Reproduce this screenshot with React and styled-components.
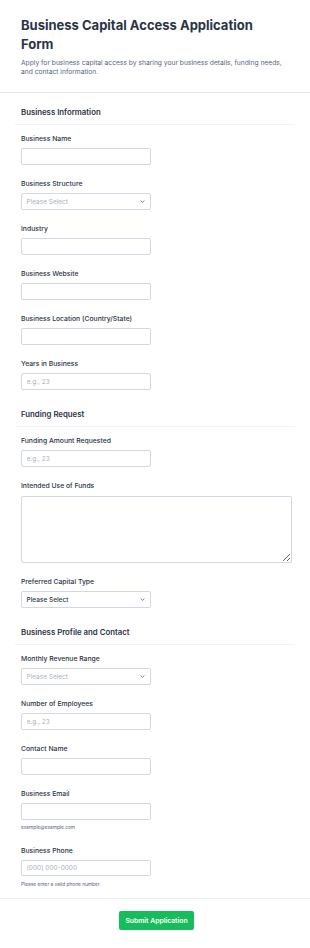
import React from "react";
import styled, { createGlobalStyle } from "styled-components";

const Global = createGlobalStyle`
  html, body { margin: 0; padding: 0; background: #fff; }
  body { font-family: Inter, "Noto Sans", sans-serif; color: #2c3345; }
  * { box-sizing: border-box; }
`;

const Page = styled.div`
  width: 310px;
  min-height: 948px;
  background: #fff;
  display: flex;
  flex-direction: column;
`;

const Header = styled.header`
  padding: 15.5px 21px 14.5px;
  border-bottom: 1px solid #e4e6eb;
`;

const Title = styled.h1`
  margin: 0;
  max-width: 250px;
  font-size: 13px;
  line-height: 19.5px;
  font-weight: 700;
  color: #2c3345;
`;

const Subtitle = styled.p`
  margin: 4px 0 0;
  font-size: 6.7px;
  line-height: 9.7px;
  color: #57647e;
`;

const Body = styled.div`
  padding: 13px 15px 10px;
  display: flex;
  flex-direction: column;
  gap: 18.4px;
`;

const Section = styled.section`
  display: flex;
  flex-direction: column;
`;

const SectionTitle = styled.h2`
  margin: 0 0 9.7px;
  padding: 0 6px 5.3px;
  font-size: 7.8px;
  line-height: 12px;
  font-weight: 600;
  color: #2c3345;
  border-bottom: 1px solid #f1f2f5;
`;

const Fields = styled.div`
  display: flex;
  flex-direction: column;
  gap: 14.3px;
  padding: 0 6px;
`;

const Field = styled.div`
  display: flex;
  flex-direction: column;
  align-items: flex-start;
`;

const Label = styled.label`
  font-size: 6.8px;
  line-height: 10px;
  font-weight: 500;
  color: #2c3345;
  margin-bottom: ${(p) => (p.$tight ? 5 : 4)}px;
`;

const Input = styled.input`
  width: 130px;
  height: 16.7px;
  border: 1px solid #d3d8e2;
  border-radius: 2px;
  padding: 0 4.5px;
  font-family: Inter, sans-serif;
  font-size: 6.5px;
  color: #2c3345;
  outline: none;
  background: #fff;
  &::placeholder { color: #a9b1c0; }
`;

const TextArea = styled.textarea`
  width: 271px;
  height: 66.6px;
  border: 1px solid #d3d8e2;
  border-radius: 2px;
  padding: 4px;
  font-family: Inter, sans-serif;
  font-size: 6.5px;
  outline: none;
  resize: vertical;
  display: block;
`;

const SelectBox = styled.div`
  width: 130px;
  height: 16.7px;
  border: 1px solid #d3d8e2;
  border-radius: 2px;
  padding: 0 5px 0 4.5px;
  display: flex;
  align-items: center;
  justify-content: space-between;
  font-size: 6.5px;
  color: ${(p) => (p.$filled ? "#2c3345" : "#a9b1c0")};
  font-weight: ${(p) => (p.$filled ? 500 : 400)};
  background: #fff;
`;

const Helper = styled.div`
  margin-top: 4.5px;
  font-size: 4.8px;
  line-height: 7px;
  color: #57647e;
`;

const Footer = styled.div`
  border-top: 1px solid #eceef2;
  padding: 12px 0 17px 3px;
  display: flex;
  justify-content: center;
`;

const Button = styled.button`
  width: 75px;
  height: 19.3px;
  border: none;
  border-radius: 2px;
  background: #18bd5b;
  color: #fff;
  font-family: Inter, sans-serif;
  font-size: 6.8px;
  font-weight: 600;
  padding: 0;
  cursor: pointer;
`;

const Chevron = () => (
  <svg width="5" height="3" viewBox="0 0 5 3" fill="none">
    <path d="M0.6 0.5 L2.5 2.3 L4.4 0.5" stroke="#57647e" strokeWidth="0.8" />
  </svg>
);

const Select = ({ filled }) => (
  <SelectBox $filled={filled}>
    <span>Please Select</span>
    <Chevron />
  </SelectBox>
);

const TextField = ({ label, placeholder, helper }) => (
  <Field>
    <Label>{label}</Label>
    <Input placeholder={placeholder} />
    {helper && <Helper>{helper}</Helper>}
  </Field>
);

export default function App() {
  return (
    <Page>
      <Global />
      <Header>
        <Title>Business Capital Access Application Form</Title>
        <Subtitle>
          Apply for business capital access by sharing your business details, funding needs,
          and contact information.
        </Subtitle>
      </Header>
      <Body>
        <Section>
          <SectionTitle>Business Information</SectionTitle>
          <Fields>
            <TextField label="Business Name" />
            <Field>
              <Label>Business Structure</Label>
              <Select />
            </Field>
            <TextField label="Industry" />
            <TextField label="Business Website" />
            <TextField label="Business Location (Country/State)" />
            <TextField label="Years in Business" placeholder="e.g., 23" />
          </Fields>
        </Section>
        <Section>
          <SectionTitle>Funding Request</SectionTitle>
          <Fields>
            <TextField label="Funding Amount Requested" placeholder="e.g., 23" />
            <Field>
              <Label $tight>Intended Use of Funds</Label>
              <TextArea />
            </Field>
            <Field>
              <Label>Preferred Capital Type</Label>
              <Select filled />
            </Field>
          </Fields>
        </Section>
        <Section>
          <SectionTitle>Business Profile and Contact</SectionTitle>
          <Fields>
            <Field>
              <Label>Monthly Revenue Range</Label>
              <Select />
            </Field>
            <TextField label="Number of Employees" placeholder="e.g., 23" />
            <TextField label="Contact Name" />
            <TextField label="Business Email" helper="example@example.com" />
            <TextField
              label="Business Phone"
              placeholder="(000) 000-0000"
              helper="Please enter a valid phone number."
            />
          </Fields>
        </Section>
      </Body>
      <Footer>
        <Button>Submit Application</Button>
      </Footer>
    </Page>
  );
}
